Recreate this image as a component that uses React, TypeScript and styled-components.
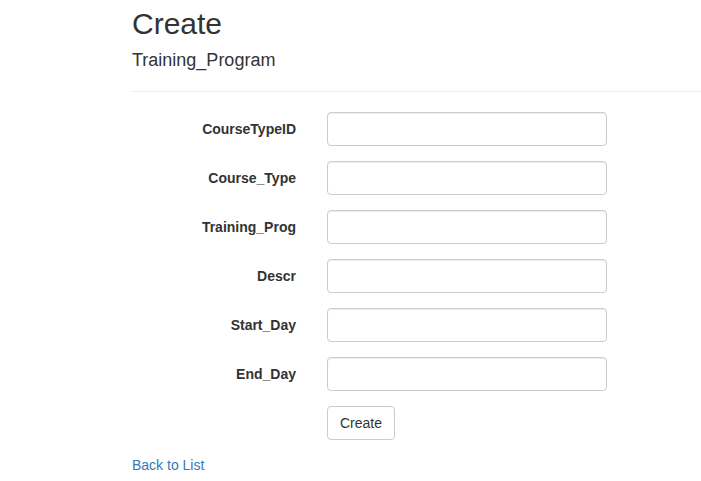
import React from "react";
import styled, { createGlobalStyle } from "styled-components";

const Global = createGlobalStyle`
  html, body { margin: 0; padding: 0; background: #fff; }
  body {
    font-family: "Liberation Sans", Arial, Helvetica, sans-serif;
    font-size: 14px;
    line-height: 1.42857143;
    color: #333;
    overflow-x: hidden;
  }
  * { box-sizing: border-box; }
`;

const Container = styled.div`
  padding: 7px 0 0 132px;
`;

const Title = styled.h2`
  font-size: 30px;
  font-weight: 500;
  line-height: 1.1;
  margin: 0 0 11px;
`;

const Subtitle = styled.h4`
  font-size: 18px;
  font-weight: 500;
  line-height: 1.1;
  margin: 0 0 10px;
`;

const Rule = styled.hr`
  margin: 20px 0;
  border: 0;
  border-top: 1px solid #eee;
  height: 0;
`;

const Form = styled.form`
  margin-left: -15px;
`;

const FormGroup = styled.div`
  display: flex;
  margin-bottom: 15px;
`;

const LabelCol = styled.label`
  width: 194px;
  padding: 7px 15px 0;
  text-align: right;
  font-weight: bold;
  flex: none;
`;

const FieldCol = styled.div`
  padding: 0 15px 0 16px;
`;

const Input = styled.input`
  display: block;
  width: 280px;
  height: 34px;
  padding: 6px 12px;
  font-family: inherit;
  font-size: 14px;
  color: #555;
  background: #fff;
  border: 1px solid #ccc;
  border-radius: 4px;
  box-shadow: inset 0 1px 1px rgba(0, 0, 0, 0.075);
`;

const Button = styled.button`
  display: inline-block;
  height: 34px;
  padding: 6px 12px;
  font-family: inherit;
  font-size: 14px;
  line-height: 1.42857143;
  color: #333;
  background: #fff;
  border: 1px solid #ccc;
  border-radius: 4px;
  cursor: pointer;
`;

const LinkRow = styled.div``;

const Link = styled.a`
  color: #337ab7;
  text-decoration: none;
`;

const fields = ["CourseTypeID", "Course_Type", "Training_Prog", "Descr", "Start_Day", "End_Day"];

export default function App() {
  return (
    <>
      <Global />
      <Container>
        <Title>Create</Title>
        <Subtitle>Training_Program</Subtitle>
        <Rule />
        <Form onSubmit={(e) => e.preventDefault()}>
          {fields.map((f) => (
            <FormGroup key={f}>
              <LabelCol htmlFor={f}>{f}</LabelCol>
              <FieldCol>
                <Input id={f} type="text" />
              </FieldCol>
            </FormGroup>
          ))}
          <FormGroup>
            <LabelCol as="div" />
            <FieldCol>
              <Button type="submit">Create</Button>
            </FieldCol>
          </FormGroup>
        </Form>
        <LinkRow>
          <Link href="#">Back to List</Link>
        </LinkRow>
      </Container>
    </>
  );
}
